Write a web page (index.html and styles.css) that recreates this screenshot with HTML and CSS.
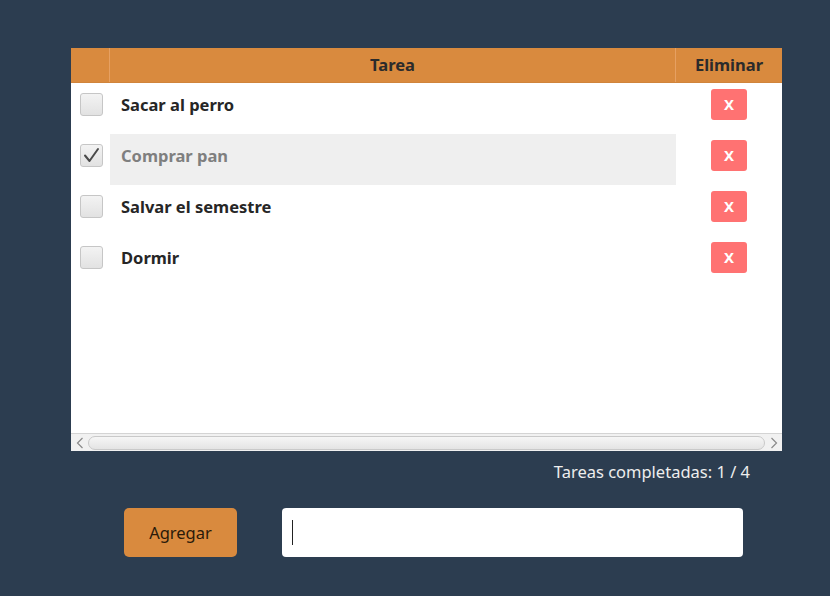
FILE: index.html
```html
<!DOCTYPE html>
<html lang="es">
<head>
<meta charset="utf-8">
<title>Tareas</title>
<link rel="stylesheet" href="styles.css">
</head>
<body>
<div class="app">
  <div class="table">
    <div class="thead">
      <div class="th th-check"></div>
      <div class="th th-task">Tarea</div>
      <div class="th th-del">Eliminar</div>
    </div>
    <div class="tbody">
      <div class="row">
        <div class="cell c-check"><span class="cb"></span></div>
        <div class="cell c-task">Sacar al perro</div>
        <div class="cell c-del"><button class="xbtn">X</button></div>
      </div>
      <div class="row done">
        <div class="cell c-check"><span class="cb"><svg viewBox="0 0 23 23" width="23" height="23"><path d="M5 11.5 L9.5 17 L18 5" fill="none" stroke="#4a4a4a" stroke-width="2" stroke-linecap="round" stroke-linejoin="round"/></svg></span></div>
        <div class="cell c-task">Comprar pan</div>
        <div class="cell c-del"><button class="xbtn">X</button></div>
      </div>
      <div class="row">
        <div class="cell c-check"><span class="cb"></span></div>
        <div class="cell c-task">Salvar el semestre</div>
        <div class="cell c-del"><button class="xbtn">X</button></div>
      </div>
      <div class="row">
        <div class="cell c-check"><span class="cb"></span></div>
        <div class="cell c-task">Dormir</div>
        <div class="cell c-del"><button class="xbtn">X</button></div>
      </div>
    </div>
    <div class="hscroll">
      <span class="arrow"><svg viewBox="0 0 8 12" width="8" height="12"><path d="M6.5 1 L1.5 6 L6.5 11" fill="none" stroke="#8a8a8a" stroke-width="1.2"/></svg></span>
      <span class="track"></span>
      <span class="arrow"><svg viewBox="0 0 8 12" width="8" height="12"><path d="M1.5 1 L6.5 6 L1.5 11" fill="none" stroke="#8a8a8a" stroke-width="1.2"/></svg></span>
    </div>
  </div>
  <div class="status">Tareas completadas: 1 / 4</div>
  <div class="controls">
    <button class="add">Agregar</button>
    <div class="input"><span class="caret"></span></div>
  </div>
</div>
</body>
</html>
```
FILE: styles.css
```css
* { box-sizing: border-box; }
html, body { margin: 0; padding: 0; }
body {
  background: #2c3d50;
  font-family: "Noto Sans", "Open Sans", "DejaVu Sans", sans-serif;
  width: 830px;
  height: 596px;
  overflow: hidden;
}
.app {
  padding: 48px 0 0 71px;
  display: flex;
  flex-direction: column;
}
.table {
  width: 711px;
  height: 403px;
  background: #fff;
  display: flex;
  flex-direction: column;
}
.thead {
  display: flex;
  height: 35px;
  background: #d98a3e;
  border-bottom: 1px solid #d0843b;
}
.th {
  font-weight: bold;
  font-size: 16.5px;
  color: #2b2b2b;
  display: flex;
  align-items: center;
  justify-content: center;
  padding-bottom: 2px;
}
.th-check { width: 39px; border-right: 1px solid #e6a062; }
.th-task { width: 566px; border-right: 1px solid #e6a062; }
.th-del { width: 106px; }
.tbody {
  flex: 1;
  display: flex;
  flex-direction: column;
}
.row {
  display: flex;
  height: 51px;
}
.cell {
  display: flex;
  align-items: center;
  padding-bottom: 9px;
}
.c-check { width: 39px; padding-left: 9px; }
.c-task {
  width: 566px;
  padding-left: 11px;
  font-weight: bold;
  font-size: 16.5px;
  color: #262626;
}
.c-del { width: 106px; justify-content: center; padding-right: 0; }
.done .c-task { background: #efefef; color: #7f7f7f; }
.cb {
  width: 23px;
  height: 23px;
  border: 1px solid #c6c6c6;
  border-radius: 3px;
  background: linear-gradient(#f3f3f3, #e2e2e2);
  display: block;
}
.cb svg { display: block; margin: -1px; }
.xbtn {
  width: 36px;
  height: 31px;
  border: none;
  border-radius: 3px;
  background: #ff7272;
  color: #fff;
  font-family: inherit;
  font-weight: bold;
  font-size: 15px;
  padding: 0;
}
.hscroll {
  height: 18px;
  display: flex;
  align-items: center;
  background: #f1f1f1;
  border-top: 1px solid #d4d4d4;
  padding: 0 1px;
}
.arrow {
  width: 15px;
  display: flex;
  justify-content: center;
  align-items: center;
}
.track {
  flex: 1;
  height: 14px;
  border: 1px solid #c9c9c9;
  border-radius: 7px;
  background: linear-gradient(#f6f6f6, #e4e4e4);
  margin: 0 1px;
}
.status {
  width: 679px;
  text-align: right;
  color: #eeeeee;
  font-size: 16.5px;
  margin-top: 10px;
  line-height: 22px;
}
.controls {
  display: flex;
  margin-top: 25px;
  margin-left: 53px;
  gap: 45px;
}
.add {
  width: 113px;
  height: 49px;
  background: #d98a3e;
  border: none;
  border-radius: 5px;
  font-family: inherit;
  font-size: 16.5px;
  color: #2a1a0a;
  padding: 0;
}
.input {
  width: 461px;
  height: 49px;
  background: #fff;
  border-radius: 4px;
  display: flex;
  align-items: center;
  padding-left: 10px;
}
.caret {
  width: 1px;
  height: 25px;
  background: #222;
}
```
